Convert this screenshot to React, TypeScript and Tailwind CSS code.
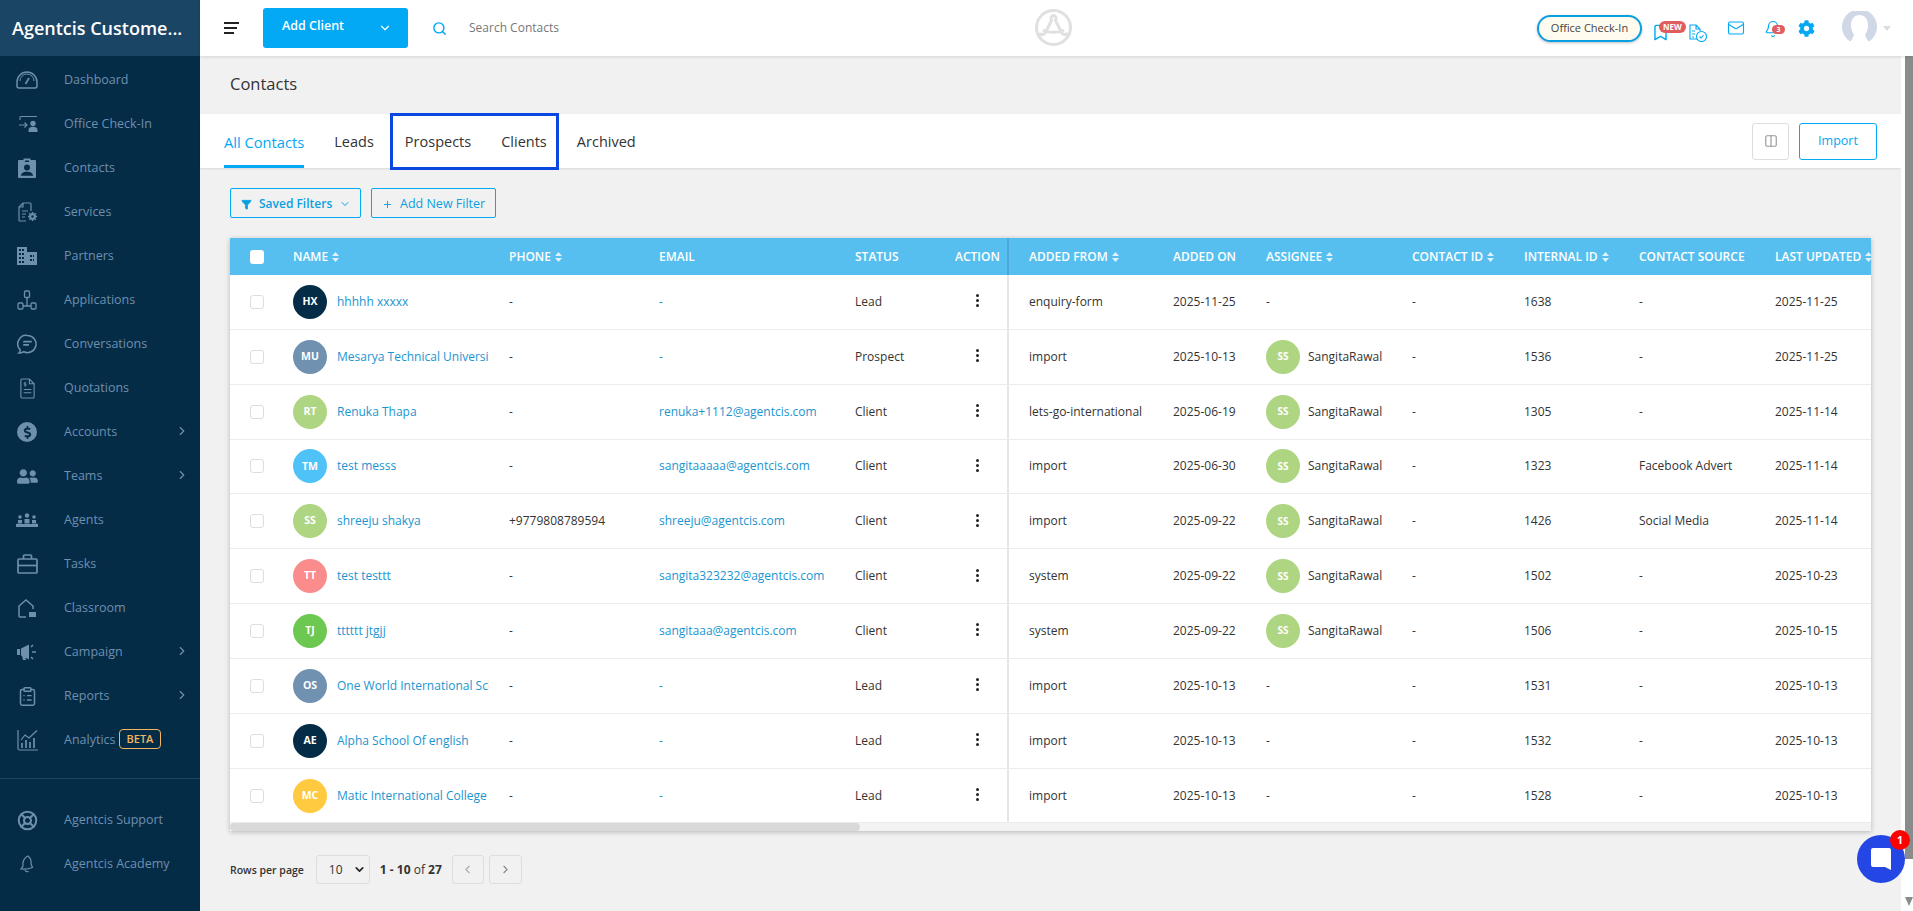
import { ChevronDown, ChevronLeft, ChevronRight, Search, Plus, Filter, Mail, Bell, LifeBuoy, ClipboardList, Bookmark, Columns2 } from "lucide-react";
import { FaUserFriends, FaCog, FaDollarSign } from "react-icons/fa";

const font = "font-['Open_Sans',sans-serif]";

// иконки которых нет в пакетах
function GaugeIcon() {
  return (
    <svg width="22" height="18" viewBox="0 0 22 18" fill="none" stroke="currentColor" strokeWidth="1.500">
      <path d="M3 17a2 2 0 0 1-2-2v-4a10 10 0 0 1 20 0v4a2 2 0 0 1-2 2z" />
      <path d="M4 10a7 7 0 0 1 14 0" strokeWidth="1" />
      <path d="m9.500 13 3.500-6" strokeWidth="1.700" />
    </svg>
  );
}

function CheckInIcon() {
  return (
    <svg width="20" height="18" viewBox="0 0 20 18" fill="none" stroke="currentColor" strokeWidth="1.100" className="ml-1">
      <path d="M1 5V2.500a1 1 0 0 1 1-1h16" />
      <path d="M0 10h8M5.500 7.500 8 10l-2.500 2.500" />
      <circle cx="14" cy="8.500" r="2.700" fill="currentColor" stroke="none" />
      <path d="M9.500 17v-2c0-2 2-3.200 4.500-3.200s4.500 1.200 4.500 3.200v2z" fill="currentColor" stroke="none" />
    </svg>
  );
}

function ContactBadgeIcon() {
  return (
    <svg width="18" height="20" viewBox="0 0 18 20" fill="currentColor">
      <path fillRule="evenodd" d="M1 2h4.500V.5h7V2H17a1 1 0 0 1 1 1v16a1 1 0 0 1-1 1H1a1 1 0 0 1-1-1V3a1 1 0 0 1 1-1zm6 .5V4h4V2.500zM9 6.500a3 3 0 1 0 0 6 3 3 0 0 0 0-6zM3 17.800h12c0-2.500-2.500-4-6-4s-6 1.500-6 4z" />
    </svg>
  );
}

function ServicesIcon() {
  return (
    <svg width="20" height="20" viewBox="0 0 20 20" fill="none" stroke="currentColor" strokeWidth="1.200" className="ml-0.5">
      <path d="M8 19H2a1 1 0 0 1-1-1V5l4-4h7a1 1 0 0 1 1 1v7M1 5h4V1" />
      <path d="M4 9h6M4 12h4M4 15h3" />
      <circle cx="14.500" cy="14.500" r="2.300" strokeWidth="2" />
      <path d="M14.500 10v2M14.500 17v2M10 14.500h2M17 14.500h2M11.300 11.300l1.400 1.400M16.300 16.300l1.400 1.400M11.300 17.700l1.400-1.400M16.300 12.700l1.400-1.400" strokeWidth="1.500" />
    </svg>
  );
}

function BuildingIcon() {
  return (
    <svg width="20" height="18" viewBox="0 0 20 18" fill="currentColor">
      <path fillRule="evenodd" d="M0 0h10v5h10v13H0zM2 2v2h2V2zm3 0v2h2V2zM2 6v2h2V6zm3 0v2h2V6zM2 10v2h2v-2zm3 0v2h2v-2zM2 14v2h2v-2zm3 0v2h2v-2zM13 8v2h2V8zm0 4v2h2v-2zM17 8h-1v2h1zm0 4h-1v2h1z" />
    </svg>
  );
}

function NetworkIcon() {
  return (
    <svg width="20" height="20" viewBox="0 0 20 20" fill="none" stroke="currentColor" strokeWidth="1.300">
      <rect x="7.500" y="1" width="5" height="6.500" rx="1.200" />
      <rect x="1" y="13" width="5" height="6" rx="1.200" />
      <rect x="14" y="13" width="5" height="6" rx="1.200" />
      <path d="M10 7.500V16M6 16h8" />
    </svg>
  );
}

function ChatCircleIcon() {
  return (
    <svg width="21" height="21" viewBox="0 0 22 22" fill="none" stroke="currentColor" strokeWidth="1.600">
      <path d="M11 1.500a9 9 0 1 1-4 17.100c-1.500.9-3 1.400-5 1.400 1-1 1.400-2 1.300-3.400A9 9 0 0 1 11 1.500z" />
      <path d="M6.500 8h9M6.500 11.500h6" strokeWidth="1.800" />
    </svg>
  );
}

function QuoteIcon() {
  return (
    <svg width="17" height="21" viewBox="0 0 18 22" fill="none" stroke="currentColor" strokeWidth="1.200">
      <path d="M3 1h8l5 5v14a1 1 0 0 1-1 1H3a1 1 0 0 1-1-1V2a1 1 0 0 1 1-1zM11 1v5h5" />
      <path d="M5 12h8M5 15.500h8" />
      <path d="M7.500 5H5.500v1.500h2V8h-2M6.500 4v5" strokeWidth=".8" />
    </svg>
  );
}

function AgentsIcon() {
  return (
    <svg width="22" height="14" viewBox="0 0 22 14" fill="currentColor">
      <circle cx="4" cy="4" r="1.800" />
      <circle cx="11" cy="2.500" r="2.200" />
      <circle cx="18" cy="4" r="1.800" />
      <path d="M2 7h4v3.500H2zM8.500 6h5v4.500h-5zM16 7h4v3.500h-4zM0 11h1.500v-1H2v1h18v-1h.5v1H22v3H0z" />
    </svg>
  );
}

function TasksIcon() {
  return (
    <svg width="21" height="20" viewBox="0 0 21 20" fill="none" stroke="currentColor" strokeWidth="1.700">
      <path d="M6.500 5V2a1 1 0 0 1 1-1h6a1 1 0 0 1 1 1v3" />
      <rect x="1" y="5" width="19" height="14" rx="1" />
      <path d="M1 11.500h19" />
    </svg>
  );
}

function ClassroomIcon() {
  return (
    <svg width="18" height="19" viewBox="0 0 18 19" fill="none" stroke="currentColor" strokeWidth="1.500">
      <path d="M8 18H2a1 1 0 0 1-1-1V7l7-6 7 6v3" />
      <rect x="11" y="13" width="7" height="5" fill="currentColor" stroke="none" />
    </svg>
  );
}

function CampaignIcon() {
  return (
    <svg width="20" height="16" viewBox="0 0 20 16" fill="currentColor">
      <path d="M0 5h3v6H0zM4 4.500l8-4v15l-8-4zM5 12h3l1 4H6z" />
      <path d="M14 3l2-2M15 8h4M14 13l2 2" fill="none" stroke="currentColor" strokeWidth="1.500" />
    </svg>
  );
}

function AnalyticsIcon() {
  return (
    <svg width="21" height="21" viewBox="0 0 21 21" fill="none" stroke="currentColor" strokeWidth="1.200">
      <path d="M1 0v18.500a1.500 1.500 0 0 0 1.500 1.500H21" />
      <path d="M4 10l4-5 4 3 8-7.500" />
      <path d="M5 18v-5M9 18v-8M13 18v-6M17 18V8" strokeWidth="1.700" />
    </svg>
  );
}

function AcademyIcon() {
  return (
    <svg width="16" height="18" viewBox="0 0 16 18" fill="none" stroke="currentColor" strokeWidth="1.200">
      <path d="M9 1c2.500 2 3.500 5 3 8l1.500 3.500c-3.500 1.500-7 1.800-11.500 1.500L4 11c-.5-4 1-8 5-10z" />
      <path d="M6 15c.5 1.500 2 2 3.500 1.500" />
    </svg>
  );
}

function AccountsIcon() {
  return (
    <span className="flex h-5 w-5 items-center justify-center rounded-full bg-[#6f8fae] text-[#042c47]">
      <FaDollarSign size={13} />
    </span>
  );
}

const navItems = [
  { label: "Dashboard", icon: <GaugeIcon /> },
  { label: "Office Check-In", icon: <CheckInIcon /> },
  { label: "Contacts", icon: <ContactBadgeIcon /> },
  { label: "Services", icon: <ServicesIcon /> },
  { label: "Partners", icon: <BuildingIcon /> },
  { label: "Applications", icon: <NetworkIcon /> },
  { label: "Conversations", icon: <ChatCircleIcon /> },
  { label: "Quotations", icon: <QuoteIcon /> },
  { label: "Accounts", icon: <AccountsIcon />, arrow: true },
  { label: "Teams", icon: <FaUserFriends size={21} />, arrow: true },
  { label: "Agents", icon: <AgentsIcon /> },
  { label: "Tasks", icon: <TasksIcon /> },
  { label: "Classroom", icon: <ClassroomIcon /> },
  { label: "Campaign", icon: <CampaignIcon />, arrow: true },
  { label: "Reports", icon: <ClipboardList size={21} strokeWidth={1.700} />, arrow: true },
  { label: "Analytics", icon: <AnalyticsIcon />, beta: true },
];

const contacts = [
  { initials: "HX", color: "bg-[#042c47]", name: "hhhhh xxxxx", phone: "-", email: "-", status: "Lead", from: "enquiry-form", added: "2025-11-25", assignee: false, internal: "1638", source: "-", updated: "2025-11-25" },
  { initials: "MU", color: "bg-[#7091b0]", name: "Mesarya Technical University", phone: "-", email: "-", status: "Prospect", from: "import", added: "2025-10-13", assignee: true, internal: "1536", source: "-", updated: "2025-11-25" },
  { initials: "RT", color: "bg-[#aed581]", name: "Renuka Thapa", phone: "-", email: "renuka+1112@agentcis.com", status: "Client", from: "lets-go-international", added: "2025-06-19", assignee: true, internal: "1305", source: "-", updated: "2025-11-14" },
  { initials: "TM", color: "bg-[#4fc3f7]", name: "test messs", phone: "-", email: "sangitaaaaa@agentcis.com", status: "Client", from: "import", added: "2025-06-30", assignee: true, internal: "1323", source: "Facebook Advert", updated: "2025-11-14" },
  { initials: "SS", color: "bg-[#aed581]", name: "shreeju shakya", phone: "+9779808789594", email: "shreeju@agentcis.com", status: "Client", from: "import", added: "2025-09-22", assignee: true, internal: "1426", source: "Social Media", updated: "2025-11-14" },
  { initials: "TT", color: "bg-[#fb8c8c]", name: "test testtt", phone: "-", email: "sangita323232@agentcis.com", status: "Client", from: "system", added: "2025-09-22", assignee: true, internal: "1502", source: "-", updated: "2025-10-23" },
  { initials: "TJ", color: "bg-[#6cc850]", name: "tttttt jtgjj", phone: "-", email: "sangitaaa@agentcis.com", status: "Client", from: "system", added: "2025-09-22", assignee: true, internal: "1506", source: "-", updated: "2025-10-15" },
  { initials: "OS", color: "bg-[#7091b0]", name: "One World International School", phone: "-", email: "-", status: "Lead", from: "import", added: "2025-10-13", assignee: false, internal: "1531", source: "-", updated: "2025-10-13" },
  { initials: "AE", color: "bg-[#042c47]", name: "Alpha School Of english", phone: "-", email: "-", status: "Lead", from: "import", added: "2025-10-13", assignee: false, internal: "1532", source: "-", updated: "2025-10-13" },
  { initials: "MC", color: "bg-[#ffca40]", name: "Matic International College", phone: "-", email: "-", status: "Lead", from: "import", added: "2025-10-13", assignee: false, internal: "1528", source: "-", updated: "2025-10-13" },
];

function SortIcon() {
  return (
    <svg width="7" height="10" viewBox="0 0 7 10" fill="currentColor" className="ml-1 shrink-0 opacity-80">
      <path d="M3.500 0 7 4H0zM3.500 10 0 6h7z" />
    </svg>
  );
}

function HeadCell({ className, label, sort }: { className: string; label: string; sort?: boolean }) {
  return (
    <div className={`flex shrink-0 items-center whitespace-nowrap ${className}`}>
      {label}
      {sort && <SortIcon />}
    </div>
  );
}

function Sidebar() {
  return (
    <aside className="flex h-full w-[200px] shrink-0 flex-col bg-[#042c47] text-[12.500px] text-[#6f8fae]">
      <div className="flex h-14 items-center bg-[#1a4565] pl-3 text-[18px] font-semibold whitespace-nowrap text-white">
        Agentcis Custome...
      </div>
      <nav className="pt-0.5">
        {navItems.map((item) => (
          <div key={item.label} className="flex h-11 items-center">
            <div className="flex w-16 shrink-0 justify-center pr-2.5">{item.icon}</div>
            <span>{item.label}</span>
            {item.beta && (
              <span className="-mt-[3px] ml-[3px] rounded-sm border border-[#f4b55f] px-[7px] text-[11px] leading-[18px] font-semibold text-[#f4b55f]">
                BETA
              </span>
            )}
            {item.arrow && <ChevronRight size={14} className="mr-[11px] ml-auto -translate-y-px" />}
          </div>
        ))}
      </nav>
      <div className="mt-4 border-t border-[#1a4565] pt-[19px]">
        <div className="flex h-11 items-center">
          <div className="flex w-16 shrink-0 justify-center pr-2.5">
            <LifeBuoy size={21} strokeWidth={2.300} />
          </div>
          <span>Agentcis Support</span>
        </div>
        <div className="flex h-11 items-center">
          <div className="flex w-16 shrink-0 justify-center pr-2.5">
            <AcademyIcon />
          </div>
          <span>Agentcis Academy</span>
        </div>
      </div>
    </aside>
  );
}

function Topbar() {
  return (
    <header className="relative z-10 flex h-14 shrink-0 items-center bg-white shadow-[0_1px_3px_rgba(0,0,0,0.12)]">
      <div className="ml-6 flex w-[15px] flex-col gap-[3px]">
        <div className="h-[2px] w-[15px] bg-[#222]" />
        <div className="h-[2px] w-[13px] bg-[#222]" />
        <div className="h-[2px] w-[10px] bg-[#222]" />
      </div>
      <div className="ml-6 flex h-10 w-[145px] items-center rounded-[3px] bg-[#03a9f4] text-[12.500px] font-semibold text-white">
        <span className="w-[99px] -translate-y-0.5 pl-[19px]">Add Client</span>
        <ChevronDown size={14} className="ml-4" />
      </div>
      <Search size={15} strokeWidth={2.300} className="ml-6 text-[#03a9f4]" />
      <span className="ml-[22px] text-[12px] text-[#777]">Search Contacts</span>

      <div className="absolute left-[835px] top-[9px] text-[#e0e0e0]">
        <svg width="37" height="37" viewBox="0 0 37 37" fill="none" stroke="currentColor" strokeWidth="3">
          <circle cx="18.500" cy="18.500" r="17" />
          <path d="M18.500 6.500c-2.500 0-3 2.500-2 5l-6 12c-1 2-4 3-6.500 1M18.500 6.500c2.500 0 3 2.500 2 5l6 12c1 2 4 3 6.500 1M8 21c5 3 16 3 21 0" />
        </svg>
      </div>

      <div className="ml-auto flex h-full items-center">
        <div className="flex h-[27px] w-[105px] items-center justify-center rounded-full border-2 border-[#0a9fe0] bg-[#fffbee] text-[11px] text-[#444] shadow-[0_1px_3px_rgba(0,0,0,0.25)]">
          Office Check-In
        </div>
        <div className="relative ml-3 h-full w-[30px]">
          <Bookmark size={19} strokeWidth={1.800} className="absolute left-[-3px] top-[23px] text-[#03a9f4]" />
          <span className="absolute left-[5px] top-[21px] rounded-[6px] bg-[#e05d5d] px-1 text-[8px] leading-3 font-bold text-white">NEW</span>
        </div>
        <svg width="18" height="18" viewBox="0 0 18 18" fill="none" stroke="#03a9f4" strokeWidth="1.100" className="ml-[5px] mt-[10px]">
          <path d="M8 15H1V1h6l4 4v2M7 1v4h4M3 7h3M3 10h3M3 13h2" />
          <circle cx="12.500" cy="12.500" r="5" />
          <path d="m10.500 12.500 1.500 1.500 2.500-3" />
        </svg>
        <Mail size={18} strokeWidth={1.500} className="ml-5 text-[#03a9f4]" />
        <div className="relative ml-[19px] h-full w-[34px]">
          <Bell size={18} strokeWidth={1.600} className="absolute left-0 top-[20px] text-[#03a9f4]" />
          <span className="absolute left-[8px] top-[25px] h-[9px] w-[13px] rounded-full bg-[#e05d5d] text-center text-[7px] leading-[9px] font-bold text-white">3</span>
        </div>
        <FaCog size={17} className="text-[#03a9f4]" />
        <div className="ml-[27px] mt-[11px] self-start">
          <svg width="35" height="31" viewBox="0 0 35 31">
            <path d="M8 30.500A17.500 17.500 0 1 1 27 30.500z" fill="#d0d8e8" />
            <path d="M17.500 4c5 0 8.500 4 8.500 10 0 5-2 8-3 10 1 2.500 2 4.500 4 7H8c2-2.500 3-4.500 4-7-1-2-3-5-3-10 0-6 3.500-10 8.500-10z" fill="#fff" />
          </svg>
        </div>
        <div className="mr-[22px] ml-[6px] h-0 w-0 border-x-4 border-t-[5px] border-x-transparent border-t-[#dcdcdc]" />
      </div>
    </header>
  );
}

function Tabs() {
  return (
    <div className="flex h-[54px] shrink-0 items-center bg-white pr-6 text-[14.500px] font-medium text-[#333] shadow-[0_1px_2px_rgba(0,0,0,0.1)]">
      <div className="ml-6 flex h-full items-center border-b-[3px] border-[#03a9f4] pt-[5px] text-[14.700px] text-[#03a9f4]">
        All Contacts
      </div>
      <span className="ml-[30px] pt-[2px]">Leads</span>
      <div className="ml-[16px] -my-[1px] flex h-[57px] w-[169px] items-center border-[3px] border-[#0a47e0] pl-3 pt-[2px]">
        <span>Prospects</span>
        <span className="ml-[30px]">Clients</span>
      </div>
      <span className="ml-[18px] pt-[2px]">Archived</span>
      <div className="ml-auto flex items-center gap-[10px]">
        <div className="flex h-[37px] w-[37px] items-center justify-center rounded-[3px] border border-[#ddd] text-[#999]">
          <Columns2 size={14} />
        </div>
        <div className="flex h-[37px] w-[78px] items-center justify-center rounded-[3px] border border-[#03a9f4] text-[12.500px] font-medium text-[#03a9f4]">
          Import
        </div>
      </div>
    </div>
  );
}

function Table() {
  return (
    <div className="mx-[30px] mt-5 overflow-hidden bg-white shadow-[0_1px_5px_rgba(0,0,0,0.25)]">
      <div className="flex h-[37px] items-center bg-[#57bfef] text-[12px] font-semibold text-white">
        <div className="flex w-[63px] shrink-0 justify-center pr-[9px]">
          <div className="h-[14px] w-[14px] rounded-[3px] bg-white" />
        </div>
        <HeadCell className="w-[216px]" label="NAME" sort />
        <HeadCell className="w-[150px]" label="PHONE" sort />
        <HeadCell className="w-[196px]" label="EMAIL" />
        <HeadCell className="w-[100px]" label="STATUS" />
        <HeadCell className="h-full w-[54px] border-r-2 border-[#4aa9d6]" label="ACTION" />
        <HeadCell className="w-[164px] pl-5" label="ADDED FROM" sort />
        <HeadCell className="w-[93px]" label="ADDED ON" />
        <HeadCell className="w-[146px]" label="ASSIGNEE" sort />
        <HeadCell className="w-[112px]" label="CONTACT ID" sort />
        <HeadCell className="w-[115px]" label="INTERNAL ID" sort />
        <HeadCell className="w-[136px]" label="CONTACT SOURCE" />
        <HeadCell className="w-[96px]" label="LAST UPDATED" sort />
      </div>
      {contacts.map((c) => (
        <div key={c.initials + c.internal} className="flex h-[54.850px] items-center border-b border-[#ececec] text-[12px] text-[#333]">
          <div className="flex w-[63px] shrink-0 justify-center pr-[9px]">
            <div className="h-[14px] w-[14px] rounded-[3px] border border-[#ddd] bg-white" />
          </div>
          <div className="flex w-[216px] shrink-0 items-center">
            <div className={`flex h-[34px] w-[34px] shrink-0 items-center justify-center rounded-full text-[10.500px] font-bold text-white ${c.color}`}>
              {c.initials}
            </div>
            <div className="ml-[10px] w-[152px] overflow-hidden whitespace-nowrap text-[#1a95d0]">{c.name}</div>
          </div>
          <div className="w-[150px] shrink-0">{c.phone}</div>
          <div className="w-[196px] shrink-0 text-[#1a95d0]">{c.email}</div>
          <div className="w-[100px] shrink-0">{c.status}</div>
          <div className="flex h-full w-[54px] shrink-0 items-center border-r-2 border-[#e6e6e6] pb-0.5">
            <div className="ml-[21px] flex flex-col gap-[2px]">
              <div className="h-[3px] w-[3px] rounded-full bg-[#222]" />
              <div className="h-[3px] w-[3px] rounded-full bg-[#222]" />
              <div className="h-[3px] w-[3px] rounded-full bg-[#222]" />
            </div>
          </div>
          <div className="w-[164px] shrink-0 pl-5">{c.from}</div>
          <div className="w-[93px] shrink-0">{c.added}</div>
          <div className="flex w-[146px] shrink-0 items-center">
            {c.assignee ? (
              <>
                <div className="flex h-[34px] w-[34px] shrink-0 items-center justify-center rounded-full bg-[#aed581] text-[10px] font-bold text-white">
                  SS
                </div>
                <span className="ml-2">SangitaRawal</span>
              </>
            ) : (
              "-"
            )}
          </div>
          <div className="w-[112px] shrink-0">-</div>
          <div className="w-[115px] shrink-0">{c.internal}</div>
          <div className="w-[136px] shrink-0">{c.source}</div>
          <div className="w-[96px] shrink-0">{c.updated}</div>
        </div>
      ))}
      <div className="h-2 bg-[#f3f3f3]">
        <div className="h-full w-[630px] rounded-full bg-[#d9d9d9]" />
      </div>
    </div>
  );
}

export default function App() {
  return (
    <div className={`flex h-[911px] w-[1913px] overflow-hidden bg-[#f1f1f1] ${font}`}>
      <Sidebar />
      <div className="flex min-w-0 flex-1 flex-col">
        <Topbar />
        <div className="flex min-h-0 flex-1">
          <main className="min-w-0 flex-1">
            <div className="flex h-[58px] items-center pb-[2px] pl-[30px] text-[16.500px] font-medium text-[#333]">Contacts</div>
            <Tabs />
            <div className="flex gap-[10px] pl-[30px] pt-5">
              <div className="flex h-[30px] w-[131px] items-center rounded-[2px] border border-[#03a9f4] pl-[10px] pt-[2px] text-[12px] font-semibold text-[#0a9fe0]">
                <Filter size={11} fill="#0a9fe0" />
                <span className="ml-[7px]">Saved Filters</span>
                <ChevronDown size={12} className="ml-[7px]" />
              </div>
              <div className="flex h-[30px] w-[125px] items-center rounded-[2px] border border-[#03a9f4] pl-[10px] pt-[2px] text-[12.500px] font-medium text-[#0a9fe0]">
                <Plus size={11} />
                <span className="ml-[7px]">Add New Filter</span>
              </div>
            </div>
            <Table />
            <div className="mt-6 flex items-center pl-[30px] text-[12px] text-[#333]">
              <span className="pt-[2px] text-[10.500px] font-semibold">Rows per page</span>
              <div className="ml-3 flex h-[29px] w-[54px] items-center rounded-[3px] border border-[#ddd] pl-[12px]">
                10
                <ChevronDown size={13} strokeWidth={3} className="ml-[10px] text-[#222]" />
              </div>
              <span className="ml-[10px]">
                <b className="font-bold">1 - 10</b> of <b className="font-bold">27</b>
              </span>
              <div className="ml-[10px] flex h-[29px] w-[32px] items-center justify-center rounded-[3px] border border-[#ddd] text-[#aaa]">
                <ChevronLeft size={13} />
              </div>
              <div className="ml-[5px] flex h-[29px] w-[33px] items-center justify-center rounded-[3px] border border-[#ddd] text-[#888]">
                <ChevronRight size={13} />
              </div>
            </div>
          </main>
          <div className="relative flex w-3 shrink-0 flex-col items-end bg-white">
            <div className="h-[803px] w-2 bg-[#8b8b8b]" />
            <div className="mt-[38px] h-0 w-0 border-x-4 border-t-[9px] border-x-transparent border-t-[#8b8b8b]" />
          </div>
        </div>
      </div>
      <div className="fixed left-[1857px] top-[835px] flex h-12 w-12 items-center justify-center rounded-full bg-[#2346e4]">
        <svg width="22" height="24" viewBox="0 0 22 24" fill="white">
          <path d="M3 1h16a2 2 0 0 1 2 2v20l-6-3H3a2 2 0 0 1-2-2V3a2 2 0 0 1 2-2z" />
        </svg>
        <span className="absolute -right-[5px] -top-[5px] flex h-5 w-5 items-center justify-center rounded-full bg-[#f00] text-[11px] font-bold text-white">1</span>
      </div>
    </div>
  );
}
